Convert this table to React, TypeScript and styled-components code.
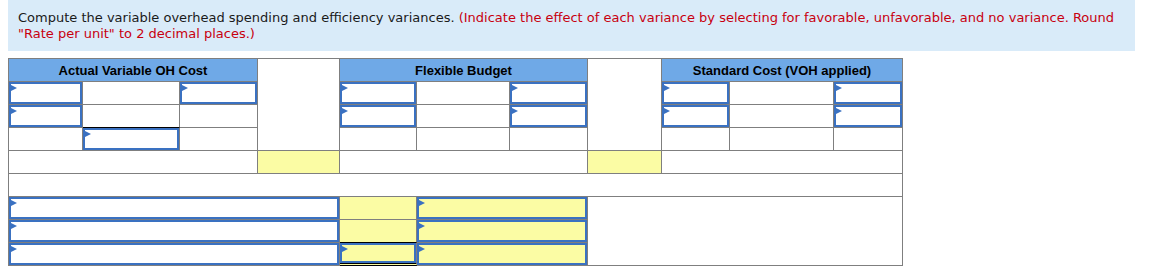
import React from "react";
import styled, { createGlobalStyle, css } from "styled-components";

const Global = createGlobalStyle`
  html, body { margin: 0; padding: 0; background: #fff; }
  body { padding: 0 8px; }
`;

const Page = styled.div`
  width: 1127px;
`;

const Instructions = styled.p`
  margin: 0;
  background: #d9ebf9;
  padding: 10px 10px 9px 10px;
  font-family: "DejaVu Sans", Verdana, sans-serif;
  font-size: 13px;
  line-height: 16px;
  color: #1a1a1a;
`;

const Hint = styled.span`
  color: #c8000f;
`;

const Sheet = styled.div`
  margin-top: 7px;
  display: grid;
  width: 895px;
  grid-template-columns: 74px 97px 78px 82px 77px 93px 78px 74px 68px 104px 69px;
  grid-auto-rows: 23px;
  border-top: 1px solid #7f7f7f;
  border-left: 1px solid #7f7f7f;
  box-sizing: border-box;
  font-family: "Liberation Sans", Arial, sans-serif;
`;

type Tone = "white" | "yellow" | "header";
type Edge = "gray" | "black" | "double";

const Cell = styled.div<{
  $col: number;
  $row: number;
  $span?: number;
  $rows?: number;
  $tone?: Tone;
  $edge?: Edge;
}>`
  grid-column: ${(p) => p.$col} / span ${(p) => p.$span ?? 1};
  grid-row: ${(p) => p.$row} / span ${(p) => p.$rows ?? 1};
  box-sizing: border-box;
  border-right: 1px solid #7f7f7f;
  border-bottom: 1px solid #7f7f7f;
  ${(p) =>
    p.$edge === "black" &&
    css`
      border-bottom: 1px solid #000;
    `}
  ${(p) =>
    p.$edge === "double" &&
    css`
      border-bottom: 3px double #000;
    `}
  background: ${(p) =>
    p.$tone === "yellow" ? "#fbfca4" : p.$tone === "header" ? "#6fa9e7" : "#fff"};
  display: flex;
  align-items: stretch;
  justify-content: stretch;
`;

const HeaderText = styled.span`
  flex: 1;
  align-self: center;
  text-align: center;
  font-weight: bold;
  font-size: 13px;
  color: #000;
`;

const Field = styled.div<{ $tone?: Tone }>`
  position: relative;
  flex: 1;
  box-sizing: border-box;
  border: 2px solid #3a71c1;
  background: ${(p) => (p.$tone === "yellow" ? "#fbfca4" : "#fff")};
  &::before {
    content: "";
    position: absolute;
    top: 1px;
    left: 0;
    width: 0;
    height: 0;
    border-left: 6px solid #3a71c1;
    border-top: 3.5px solid transparent;
    border-bottom: 3.5px solid transparent;
  }
`;

type Spec = {
  col: number;
  row: number;
  span?: number;
  rows?: number;
  tone?: Tone;
  edge?: Edge;
  input?: boolean;
  label?: string;
};

const cells: Spec[] = [
  { col: 1, row: 1, span: 3, tone: "header", label: "Actual Variable OH Cost" },
  { col: 4, row: 1, rows: 4 },
  { col: 5, row: 1, span: 3, tone: "header", label: "Flexible Budget" },
  { col: 8, row: 1, rows: 4 },
  { col: 9, row: 1, span: 3, tone: "header", label: "Standard Cost (VOH applied)" },

  { col: 1, row: 2, input: true },
  { col: 2, row: 2 },
  { col: 3, row: 2, input: true },
  { col: 5, row: 2, input: true },
  { col: 6, row: 2 },
  { col: 7, row: 2, input: true },
  { col: 9, row: 2, input: true },
  { col: 10, row: 2 },
  { col: 11, row: 2, input: true },

  { col: 1, row: 3, input: true },
  { col: 2, row: 3, edge: "black" },
  { col: 3, row: 3 },
  { col: 5, row: 3, input: true },
  { col: 6, row: 3 },
  { col: 7, row: 3, input: true },
  { col: 9, row: 3, input: true },
  { col: 10, row: 3 },
  { col: 11, row: 3, input: true },

  { col: 1, row: 4 },
  { col: 2, row: 4, input: true },
  { col: 3, row: 4 },
  { col: 5, row: 4 },
  { col: 6, row: 4 },
  { col: 7, row: 4 },
  { col: 9, row: 4 },
  { col: 10, row: 4 },
  { col: 11, row: 4 },

  { col: 1, row: 5, span: 3 },
  { col: 4, row: 5, tone: "yellow" },
  { col: 5, row: 5, span: 3 },
  { col: 8, row: 5, tone: "yellow" },
  { col: 9, row: 5, span: 3 },

  { col: 1, row: 6, span: 11 },

  { col: 1, row: 7, span: 4, input: true },
  { col: 5, row: 7, tone: "yellow" },
  { col: 6, row: 7, span: 2, tone: "yellow", input: true },
  { col: 8, row: 7, span: 4, rows: 3 },

  { col: 1, row: 8, span: 4, input: true },
  { col: 5, row: 8, tone: "yellow", edge: "black" },
  { col: 6, row: 8, span: 2, tone: "yellow", input: true },

  { col: 1, row: 9, span: 4, input: true },
  { col: 5, row: 9, tone: "yellow", edge: "double", input: true },
  { col: 6, row: 9, span: 2, tone: "yellow", input: true },
];

export default function App() {
  return (
    <Page>
      <Global />
      <Instructions>
        Compute the variable overhead spending and efficiency variances.{" "}
        <Hint>
          (Indicate the effect of each variance by selecting for favorable, unfavorable, and no
          variance. Round "Rate per unit" to 2 decimal places.)
        </Hint>
      </Instructions>
      <Sheet>
        {cells.map((c, i) => (
          <Cell
            key={i}
            $col={c.col}
            $row={c.row}
            $span={c.span}
            $rows={c.rows}
            $tone={c.tone}
            $edge={c.edge}
          >
            {c.label && <HeaderText>{c.label}</HeaderText>}
            {c.input && <Field $tone={c.tone} />}
          </Cell>
        ))}
      </Sheet>
    </Page>
  );
}
